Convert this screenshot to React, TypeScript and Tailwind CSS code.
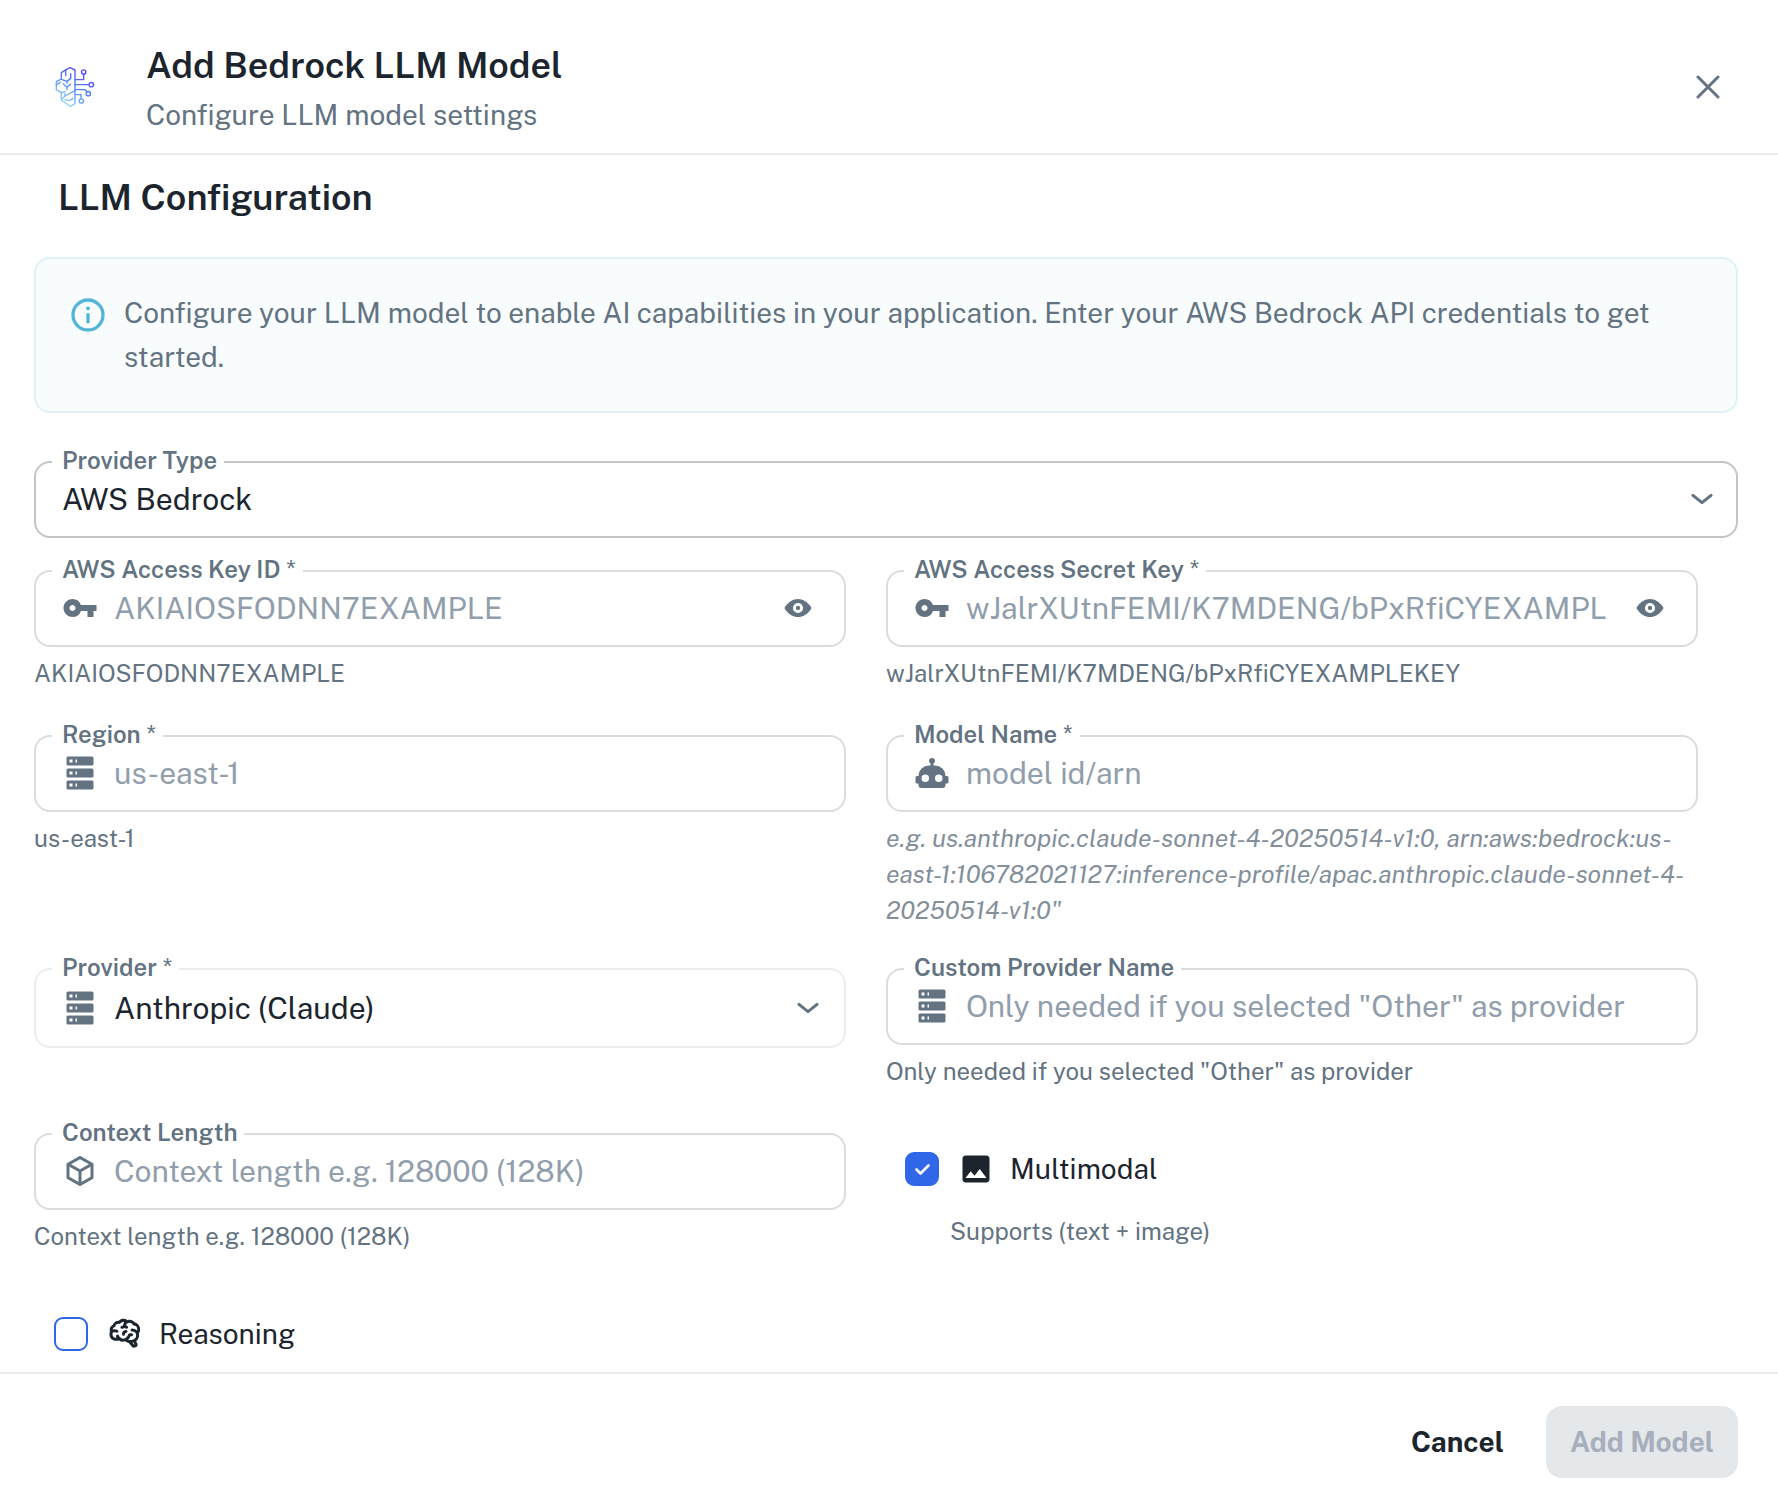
import React, { useId, useState } from 'react';
import { MdImage, MdVpnKey } from 'react-icons/md';

const MUTED = 'text-[#637381]';

const Icon: React.FC<{ d: string; className?: string }> = ({ d, className = 'size-9' }) => (
  <svg viewBox="0 0 24 24" fill="currentColor" className={`shrink-0 ${className}`} aria-hidden="true">
    <path fillRule="evenodd" d={d} />
  </svg>
);

const SERVER =
  'M4 1h16a1 1 0 0 1 1 1v4a1 1 0 0 1-1 1H4a1 1 0 0 1-1-1V2a1 1 0 0 1 1-1m0 8h16a1 1 0 0 1 1 1v4a1 1 0 0 1-1 1H4a1 1 0 0 1-1-1v-4a1 1 0 0 1 1-1m0 8h16a1 1 0 0 1 1 1v4a1 1 0 0 1-1 1H4a1 1 0 0 1-1-1v-4a1 1 0 0 1 1-1M9 5h1V3H9zm0 8h1v-2H9zm0 8h1v-2H9zM5 3v2h2V3zm0 8v2h2v-2zm0 8v2h2v-2z';
const ROBOT =
  'M12 2a2 2 0 0 1 2 2c0 .74-.4 1.39-1 1.73V7h1a7 7 0 0 1 7 7h1a1 1 0 0 1 1 1v3a1 1 0 0 1-1 1h-1v1a2 2 0 0 1-2 2H5a2 2 0 0 1-2-2v-1H2a1 1 0 0 1-1-1v-3a1 1 0 0 1 1-1h1a7 7 0 0 1 7-7h1V5.730c-.6-.34-1-.99-1-1.730a2 2 0 0 1 2-2M7.500 13A2.500 2.500 0 0 0 5 15.500A2.500 2.500 0 0 0 7.500 18a2.500 2.500 0 0 0 2.500-2.500A2.500 2.500 0 0 0 7.500 13m9 0a2.500 2.500 0 0 0-2.500 2.500a2.500 2.500 0 0 0 2.500 2.500a2.500 2.500 0 0 0 2.500-2.500a2.500 2.500 0 0 0-2.500-2.500';
const CUBE =
  'M21 16.500c0 .38-.21.71-.53.88l-7.900 4.440c-.16.12-.36.18-.57.18s-.41-.06-.57-.18l-7.900-4.440A.991.991 0 0 1 3 16.500v-9c0-.38.21-.71.53-.88l7.900-4.440c.16-.12.36-.18.57-.18s.41.06.57.18l7.900 4.440c.32.17.53.5.53.88zM12 4.150L6.040 7.500L12 10.850l5.960-3.350zM5 15.910l6 3.380v-6.710L5 9.210zm14 0v-6.700l-6 3.370v6.710z';
const BRAIN =
  'M21.330 12.910c.09 1.550-.62 3.040-1.890 3.950l.77 1.490c.23.45.26.98.06 1.450c-.19.47-.58.84-1.060 1l-.79.25a1.690 1.690 0 0 1-1.860-.55L14.440 18c-.89-.15-1.730-.53-2.440-1.100c-.5.15-1 .23-1.500.23c-.88 0-1.760-.27-2.500-.79c-.53.16-1.070.23-1.620.22c-.79.01-1.570-.15-2.300-.45a4.105 4.105 0 0 1-2.430-3.610c-.08-.72.04-1.450.35-2.110c-.29-.75-.32-1.570-.07-2.330C2.300 7.110 3 6.320 3.870 5.820c.58-1.690 2.210-2.820 4-2.700c1.600-1.500 4.050-1.660 5.830-.37c.42-.11.86-.17 1.300-.17c1.360-.03 2.650.57 3.500 1.640c2.040.53 3.500 2.350 3.580 4.470c.05 1.110-.25 2.200-.86 3.130c.07.36.11.72.11 1.090m-5-1.410c.57.07 1.020.5 1.020 1.070a1 1 0 0 1-1 1h-.63c-.32.9-.88 1.690-1.620 2.290c.25.09.51.14.77.21c5.130-.07 4.530-3.200 4.530-3.250a2.590 2.590 0 0 0-2.690-2.490a1 1 0 0 1-1-1a1 1 0 0 1 1-1c1.230.03 2.410.49 3.330 1.300c.05-.29.08-.59.08-.89c-.06-1.240-.62-2.320-2.870-2.530c-1.250-2.960-4.400-1.320-4.400-.4c-.03.23.21.72.25.75a1 1 0 0 1 1 1c0 .55-.45 1-1 1c-.53-.02-1.030-.22-1.430-.56c-.48.31-1.030.5-1.600.56c-.57.05-1.040-.35-1.070-.9a.968.968 0 0 1 .88-1.100c.16-.02.94-.14.94-.77c0-.66.25-1.290.68-1.790c-.92-.25-1.910.08-2.910 1.290C6.750 5 6 5.250 5.450 7.200C4.500 7.670 4 8 3.780 9c1.080-.22 2.190-.13 3.220.25c.5.19.78.75.59 1.290c-.19.52-.77.78-1.290.59c-.73-.32-1.550-.34-2.300-.06c-.32.27-.32.83-.32 1.270c0 .74.37 1.430 1 1.830c.53.27 1.120.41 1.710.4q-.225-.39-.39-.81a1.038 1.038 0 0 1 1.960-.68c.4 1.140 1.420 1.920 2.620 2.050c1.370-.07 2.590-.88 3.190-2.130c.23-1.380 1.340-1.500 2.560-1.500m2 7.470l-.62-1.300l-.71.16l1 1.250zm-4.650-8.610a1 1 0 0 0-.91-1.030c-.71-.04-1.400.2-1.930.67c-.57.58-.87 1.380-.84 2.190a1 1 0 0 0 1 1c.57 0 1-.45 1-1c0-.27.07-.54.23-.76c.12-.10.27-.15.43-.15c.55.03 1.020-.38 1.020-.92';

const EyeIcon = () => (
  <svg viewBox="0 0 24 24" className="size-8 shrink-0" aria-hidden="true">
    <path
      fill="currentColor"
      fillRule="evenodd"
      d="M2 12c0 .7.500 1.300 1.200 2.100C5.200 16.600 8.300 18.800 12 18.800s6.800-2.200 8.800-4.700c.7-.8 1.200-1.400 1.200-2.100s-.5-1.300-1.200-2.100C18.800 7.400 15.700 5.200 12 5.200S5.200 7.400 3.200 9.900C2.500 10.700 2 11.300 2 12m10-3.800a3.800 3.800 0 1 0 0 7.600a3.800 3.800 0 0 0 0-7.600m0 2.200a1.600 1.600 0 1 1 0 3.200a1.600 1.600 0 0 1 0-3.200"
    />
  </svg>
);

const ChevronIcon = () => (
  <svg viewBox="0 0 24 24" className={`pointer-events-none size-8 shrink-0 ${MUTED}`} aria-hidden="true">
    <path d="M5.200 9.300l6.800 5.400 6.800-5.400" fill="none" stroke="currentColor" strokeWidth="2.300" strokeLinecap="round" strokeLinejoin="round" />
  </svg>
);

const LogoIcon = () => (
  <svg viewBox="30 33 120 126" className="h-[42px] w-10 shrink-0" fill="none" strokeWidth="4.200" strokeLinecap="round" strokeLinejoin="round" stroke="url(#logo-gradient)" aria-hidden="true">
    <defs>
      <linearGradient id="logo-gradient" gradientUnits="userSpaceOnUse" x1="125" y1="45" x2="55" y2="150">
        <stop stopColor="#5b3ff0" />
        <stop offset="0.500" stopColor="#4f86f7" />
        <stop offset="1" stopColor="#9fe0fb" />
      </linearGradient>
    </defs>
    <path d="M90 45L75 38L63 44L49 53V72L34 80V104L49 113V135L76 154L90 146Z" />
    <path d="M62 44V62M77 56V70L66 79L49 73M34 90L46 82M66 79V84M55 87L66 97L76 88M66 97V104M49 113L60 110M49 135L60 123L88 108M60 123V116M60 134L74 137L84 130" />
    <path d="M90 74H116V58M90 89H131M90 104H120L127 110M90 119H108V131" />
    <circle cx="116" cy="51" r="6.500" />
    <circle cx="139" cy="89" r="6.500" />
    <circle cx="130" cy="116" r="6.500" />
    <circle cx="109" cy="138" r="6.500" />
  </svg>
);

interface OutlinedProps {
  id: string;
  label: string;
  required?: boolean;
  borderClass?: string;
  heightClass?: string;
  children: React.ReactNode;
}

// fieldset draws the notch behind the floating label
const Outlined: React.FC<OutlinedProps> = ({
  id,
  label,
  required,
  borderClass = 'border-[#dcdcdc]',
  heightClass = 'h-[88px]',
  children,
}) => (
  <fieldset className={`-mt-[11px] min-w-0 rounded-2xl border-2 px-4 ${heightClass} ${borderClass}`}>
    <legend className="h-6 pr-[7px] pl-[10px] text-[24px] leading-5 font-semibold text-[#637381]">
      <label htmlFor={id}>
        {label}
        {required && <span className="font-normal"> *</span>}
      </label>
    </legend>
    {children}
  </fieldset>
);

interface TextFieldProps {
  label: string;
  placeholder: string;
  icon: React.ReactNode;
  helper: string;
  helperClass?: string;
  required?: boolean;
  secret?: boolean;
}

const TextField: React.FC<TextFieldProps> = ({
  label,
  placeholder,
  icon,
  helper,
  helperClass = 'text-[24px] text-[#637381]',
  required,
  secret,
}) => {
  const id = useId();
  const [value, setValue] = useState('');

  return (
    <div>
      <Outlined id={id} label={label} required={required}>
        <div className={`flex h-[50px] items-center gap-4 pr-[14px] pl-[10px] ${MUTED}`}>
          {icon}
          <input
            id={id}
            type="text"
            value={value}
            placeholder={placeholder}
            onChange={(e) => setValue(e.target.value)}
            className="min-w-0 flex-1 bg-transparent text-[30px] text-[#1c252e] outline-none placeholder:text-[#919eab]"
          />
          {secret && (
            <button type="button" aria-label="Toggle visibility" className="ml-3">
              <EyeIcon />
            </button>
          )}
        </div>
      </Outlined>
      <p className={`mt-2 min-h-10 leading-9 ${helperClass}`}>{helper}</p>
    </div>
  );
};

interface SelectFieldProps {
  label: string;
  options: string[];
  icon?: React.ReactNode;
  required?: boolean;
  borderClass: string;
  heightClass?: string;
  rowClass: string;
}

const SelectField: React.FC<SelectFieldProps> = ({ label, options, icon, required, borderClass, heightClass, rowClass }) => {
  const id = useId();

  return (
    <Outlined id={id} label={label} required={required} borderClass={borderClass} heightClass={heightClass}>
      <div className={`flex items-center gap-4 pl-[10px] ${rowClass} ${MUTED}`}>
        {icon}
        <select id={id} className="min-w-0 flex-1 appearance-none bg-transparent text-[30px] text-[#1c252e] outline-none">
          {options.map((option) => (
            <option key={option}>{option}</option>
          ))}
        </select>
        <ChevronIcon />
      </div>
    </Outlined>
  );
};

const CheckField: React.FC<{ label: string; icon: React.ReactNode; initial: boolean }> = ({ label, icon, initial }) => {
  const [checked, setChecked] = useState(initial);

  return (
    <label className="flex h-10 items-center gap-[19px] text-[28px] text-[#1c252e]">
      <span className="grid size-[34px] place-items-center">
        <input
          type="checkbox"
          checked={checked}
          onChange={(e) => setChecked(e.target.checked)}
          className="col-start-1 row-start-1 size-[34px] appearance-none rounded-[9px] border-2 border-[#2f67e8] checked:bg-[#2f67e8]"
        />
        {checked && (
          <svg viewBox="0 0 34 34" className="pointer-events-none col-start-1 row-start-1 size-[34px]" aria-hidden="true">
            <path d="M11.500 17.500l4 4 8-8" fill="none" stroke="#fff" strokeWidth="2.600" strokeLinecap="round" strokeLinejoin="round" />
          </svg>
        )}
      </span>
      <span className="flex items-center gap-4">
        {icon}
        {label}
      </span>
    </label>
  );
};

const App: React.FC = () => {
  return (
    <div className="flex min-h-screen flex-col bg-white font-['Public_Sans','Inter',sans-serif] text-[#1c252e]">
      <header className="flex items-center border-b-2 border-[#ebebeb] pt-[38px] pr-[46px] pb-[17px] pl-[55px]">
        <LogoIcon />
        <div className="ml-[51px] flex-1">
          <h1 className="text-[36px] leading-[54px] font-semibold">Add Bedrock LLM Model</h1>
          <p className={`mt-0.5 text-[28px] leading-[42px] ${MUTED}`}>Configure LLM model settings</p>
        </div>
        <button type="button" aria-label="Close" className={`p-3 ${MUTED}`}>
          <svg viewBox="0 0 24 24" className="size-6" fill="none" stroke="currentColor" strokeWidth="3" strokeLinecap="round" aria-hidden="true">
            <path d="M2 2l20 20M22 2L2 22" />
          </svg>
        </button>
      </header>

      <main className="flex-1 pr-10 pl-[34px]">
        <h2 className="px-6 pt-4 text-[36px] leading-[52px] font-semibold">LLM Configuration</h2>

        <div className="mt-[34px] flex gap-4 rounded-2xl border-2 border-[#dff1f6] bg-[#f8fcfd] p-8">
          <svg viewBox="0 0 24 24" className="mt-1 size-10 shrink-0 text-[#54b5d8]" fill="none" stroke="currentColor" strokeWidth="2" aria-hidden="true">
            <circle cx="12" cy="12" r="9" />
            <path d="M12 7v2M12 11v6" />
          </svg>
          <p className={`text-[28px] leading-11 ${MUTED}`}>
            Configure your LLM model to enable AI capabilities in your application. Enter your AWS Bedrock API credentials to get started.
          </p>
        </div>

        <div className="flow-root pt-12">
          <SelectField label="Provider Type" options={['AWS Bedrock']} borderClass="border-[#c4c4c4]" rowClass="h-[50px] pr-[2px]" />
        </div>

        <div className="grid grid-cols-2 gap-10 pt-8 pr-10">
          <TextField
            label="AWS Access Key ID"
            required
            placeholder="AKIAIOSFODNN7EXAMPLE"
            icon={<MdVpnKey className="size-9 shrink-0" />}
            helper="AKIAIOSFODNN7EXAMPLE"
            secret
          />
          <TextField
            label="AWS Access Secret Key"
            required
            placeholder="wJalrXUtnFEMI/K7MDENG/bPxRfiCYEXAMPLEKEY"
            icon={<MdVpnKey className="size-9 shrink-0" />}
            helper="wJalrXUtnFEMI/K7MDENG/bPxRfiCYEXAMPLEKEY"
            secret
          />
          <TextField label="Region" required placeholder="us-east-1" icon={<Icon d={SERVER} />} helper="us-east-1" />
          <TextField
            label="Model Name"
            required
            placeholder="model id/arn"
            icon={<Icon d={ROBOT} />}
            helper={'e.g. us.anthropic.claude-sonnet-4-20250514-v1:0, arn:aws:bedrock:us-east-1:106782021127:inference-profile/apac.anthropic.claude-sonnet-4-20250514-v1:0"'}
            helperClass="text-[25px] text-[#838f9b] italic"
          />
          <SelectField
            label="Provider"
            required
            options={['Anthropic (Claude)', 'Other']}
            icon={<Icon d={SERVER} />}
            borderClass="border-[#ececec]"
            heightClass="h-[91px]"
            rowClass="h-[54px] pr-1"
          />
          <TextField
            label="Custom Provider Name"
            placeholder={'Only needed if you selected "Other" as provider'}
            icon={<Icon d={SERVER} />}
            helper={'Only needed if you selected "Other" as provider'}
          />
          <TextField
            label="Context Length"
            placeholder="Context length e.g. 128000 (128K)"
            icon={<Icon d={CUBE} />}
            helper="Context length e.g. 128000 (128K)"
          />
          <div className="pt-4 pl-[19px]">
            <CheckField label="Multimodal" icon={<MdImage className="size-9 shrink-0" />} initial />
            <p className={`mt-6 pl-[45px] text-[24px] leading-9 ${MUTED}`}>Supports (text + image)</p>
          </div>
          <div className="pt-4 pl-5">
            <CheckField label="Reasoning" icon={<Icon d={BRAIN} />} initial={false} />
          </div>
        </div>
      </main>

      <footer className="flex items-center justify-end gap-[18px] border-t-2 border-[#ebebeb] pt-8 pr-10 pb-5 text-[28px] font-bold">
        <button type="button" className="h-[72px] rounded-2xl px-6">
          Cancel
        </button>
        <button type="button" disabled className="h-[72px] rounded-2xl bg-[#e4e8eb] px-6 text-[#a6afbb]">
          Add Model
        </button>
      </footer>
    </div>
  );
};

export default App;
